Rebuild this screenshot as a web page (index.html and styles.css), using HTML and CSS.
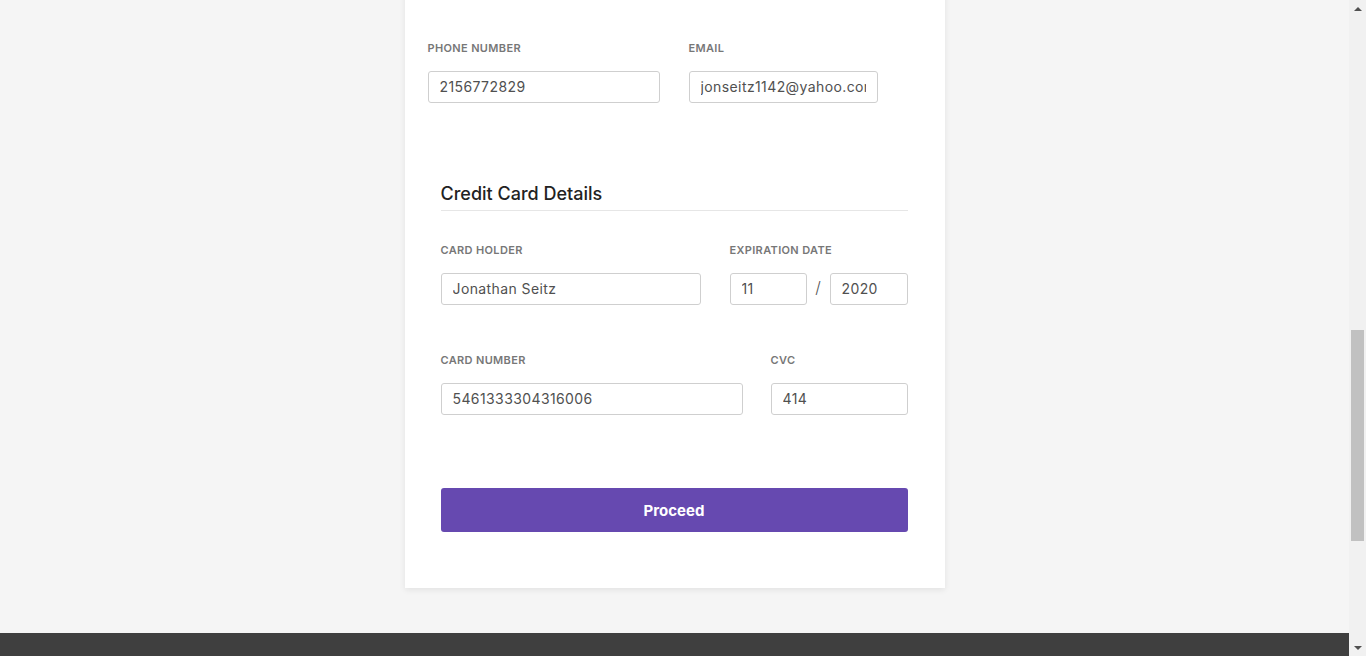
FILE: index.html
```html
<!DOCTYPE html>
<html lang="en">
<head>
<meta charset="utf-8">
<title>Checkout</title>
<link rel="stylesheet" href="styles.css">
</head>
<body>
<main class="page">
  <section class="card">
    <div class="card-top"></div>
    <div class="contact-row">
      <div class="field phone">
        <label class="label">Phone Number</label>
        <input class="input" type="text" value="2156772829">
      </div>
      <div class="field email">
        <label class="label">Email</label>
        <input class="input" type="text" value="jonseitz1142@yahoo.com">
      </div>
    </div>
    <div class="cc">
      <h2 class="cc-title">Credit Card Details</h2>
      <div class="cc-row">
        <div class="field holder">
          <label class="label">Card Holder</label>
          <input class="input" type="text" value="Jonathan Seitz">
        </div>
        <div class="field expiry">
          <label class="label">Expiration Date</label>
          <div class="expiry-inputs">
            <input class="input month" type="text" value="11">
            <span class="slash">/</span>
            <input class="input year" type="text" value="2020">
          </div>
        </div>
      </div>
      <div class="cc-row">
        <div class="field number">
          <label class="label">Card Number</label>
          <input class="input" type="text" value="5461333304316006">
        </div>
        <div class="field cvc">
          <label class="label">CVC</label>
          <input class="input" type="text" value="414">
        </div>
      </div>
      <button class="proceed" type="button">Proceed</button>
    </div>
  </section>
</main>
<footer class="footer"></footer>
<div class="scrollbar" aria-hidden="true">
  <div class="sb-arrow sb-up"></div>
  <div class="sb-track"><div class="sb-thumb"></div></div>
  <div class="sb-arrow sb-down"></div>
</div>
<script src="script.js"></script>
</body>
</html>
```
FILE: styles.css
```css
body {
  margin: 0;
  padding-right: 17px;
  background: #f5f5f5;
  font-family: "Inter", "Open Sans", "Liberation Sans", sans-serif;
  color: #444;
}
.page {
  display: flex;
  justify-content: center;
  padding-bottom: 45px;
}
.card {
  width: 540px;
  box-sizing: border-box;
  background: #fff;
  padding: 0 24px 56px 23px;
  box-shadow: 0 2px 6px rgba(0, 0, 0, 0.08);
}
.card-top {
  height: 1014px;
}
.contact-row {
  display: flex;
  gap: 29px;
}
.field {
  display: flex;
  flex-direction: column;
}
.label {
  display: block;
  font-size: 11px;
  line-height: 13px;
  padding-top: 1px;
  font-weight: 600;
  text-transform: uppercase;
  color: #777;
  letter-spacing: 0.35px;
  margin-bottom: 16px;
}
.input {
  box-sizing: border-box;
  height: 32px;
  border: 1px solid #cfcfcf;
  border-radius: 3px;
  padding: 0 11px 2px 11px;
  font-family: inherit;
  font-size: 14px;
  letter-spacing: 0.4px;
  color: #505050;
  background: #fff;
  outline: none;
}
.phone .input { width: 232px; }
.email .input { width: 189px; }
.cc {
  margin: 78px 13px 0 13px;
}
.cc-title {
  margin: 0;
  font-size: 18px;
  line-height: 24px;
  font-weight: 500;
  color: #222;
  padding-top: 1px;
  padding-bottom: 4px;
  border-bottom: 1px solid #e6e6e6;
  margin-bottom: 32px;
}
.cc-row {
  display: flex;
  justify-content: space-between;
  margin-bottom: 48px;
}
.holder .input { width: 260px; }
.expiry-inputs {
  display: flex;
  align-items: center;
}
.month { width: 77px; }
.year { width: 78px; }
.slash {
  width: 23px;
  text-align: center;
  font-size: 16px;
  font-weight: 300;
  color: #555;
  margin-top: -4px;
}
.number .input { width: 302px; }
.cvc .input { width: 137px; }
.cc-row + .cc-row {
  margin-bottom: 73px;
}
.proceed {
  display: block;
  width: 100%;
  height: 44px;
  border: none;
  border-radius: 3px;
  background: #6649b0;
  color: #fff;
  font-family: inherit;
  font-size: 15px;
  font-weight: 700;
  cursor: pointer;
}
.footer {
  height: 328px;
  background: #3f3f3f;
}
.scrollbar {
  position: fixed;
  top: 0;
  right: 0;
  width: 17px;
  height: 100vh;
  background: #f1f1f1;
  display: flex;
  flex-direction: column;
}
.sb-arrow {
  height: 17px;
  flex: none;
  display: flex;
  align-items: center;
  justify-content: center;
}
.sb-up::before {
  content: "";
  border-left: 4px solid transparent;
  border-right: 4px solid transparent;
  border-bottom: 4px solid #505050;
}
.sb-down::before {
  content: "";
  border-left: 4px solid transparent;
  border-right: 4px solid transparent;
  border-top: 4px solid #505050;
}
.sb-track {
  flex: 1;
  padding: 313px 2px 0 2px;
}
.sb-thumb {
  height: 211px;
  background: #c1c1c1;
}
```
FILE: script.js
```js
window.scrollTo(0, 973);
window.addEventListener('load', function () { window.scrollTo(0, 973); });
```
